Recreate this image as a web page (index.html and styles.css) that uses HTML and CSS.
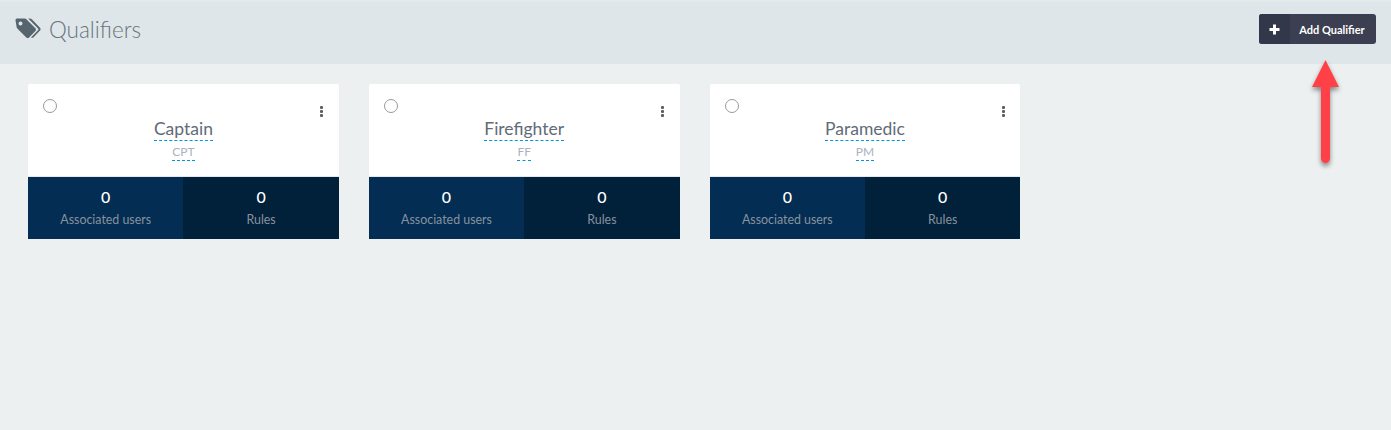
FILE: index.html
```html
<!DOCTYPE html>
<html lang="en">
<head>
  <meta charset="UTF-8" />
  <title>Qualifiers</title>
  <link rel="stylesheet" href="styles.css">
</head>
<body>

<div class="page-header">
  <h1 class="page-title">
    <svg class="tags-icon" width="26" height="22" viewBox="0 0 26 22">
      <path fill="#56646e" d="M0.5 2.2C0.5 1.2 1.2 0.5 2.2 0.5H9.6C10.3 0.5 10.9 0.8 11.4 1.3L20.4 10.3C21.2 11.1 21.2 12.3 20.4 13.1L14.1 19.4C13.3 20.2 12.1 20.2 11.3 19.4L2.3 10.4C1.8 9.9 1.5 9.3 1.5 8.6ZM5.5 3.4A2 2 0 1 0 5.5 7.4A2 2 0 1 0 5.5 3.4Z"/>
      <path fill="#56646e" d="M13.2 0.5H15C15.7 0.5 16.3 0.8 16.8 1.3L25 9.8C25.8 10.6 25.8 11.8 25 12.6L18.6 19.2C17.9 19.9 16.8 20 16 19.4L23 12.3C23.5 11.8 23.5 11 23 10.5Z"/>
    </svg>
    Qualifiers
  </h1>
  <button class="add-btn">
    <span class="add-btn-icon">
      <svg width="11" height="11" viewBox="0 0 11 11"><path fill="#fff" d="M4 0.5H7V4H10.5V7H7V10.5H4V7H0.5V4H4Z"/></svg>
    </span>
    <span class="add-btn-label">Add Qualifier</span>
  </button>
</div>

<div class="card-list">
  <div class="card">
    <div class="card-top">
      <span class="radio"></span>
      <span class="dots"><i></i><i></i><i></i></span>
      <div class="card-name"><span>Captain</span></div>
      <div class="card-code"><span>CPT</span></div>
    </div>
    <div class="card-stats">
      <div class="stat stat-users"><b>0</b><span>Associated users</span></div>
      <div class="stat stat-rules"><b>0</b><span>Rules</span></div>
    </div>
  </div>

  <div class="card">
    <div class="card-top">
      <span class="radio"></span>
      <span class="dots"><i></i><i></i><i></i></span>
      <div class="card-name"><span>Firefighter</span></div>
      <div class="card-code"><span>FF</span></div>
    </div>
    <div class="card-stats">
      <div class="stat stat-users"><b>0</b><span>Associated users</span></div>
      <div class="stat stat-rules"><b>0</b><span>Rules</span></div>
    </div>
  </div>

  <div class="card">
    <div class="card-top">
      <span class="radio"></span>
      <span class="dots"><i></i><i></i><i></i></span>
      <div class="card-name"><span>Paramedic</span></div>
      <div class="card-code"><span>PM</span></div>
    </div>
    <div class="card-stats">
      <div class="stat stat-users"><b>0</b><span>Associated users</span></div>
      <div class="stat stat-rules"><b>0</b><span>Rules</span></div>
    </div>
  </div>
</div>

<!-- red annotation arrow over the page -->
<svg class="arrow" width="41" height="112" viewBox="0 0 41 112">
  <defs>
    <filter id="arrow-shadow" x="-40%" y="-10%" width="180%" height="125%">
      <feDropShadow dx="0" dy="3" stdDeviation="2.5" flood-color="#000" flood-opacity="0.45"/>
    </filter>
  </defs>
  <path filter="url(#arrow-shadow)" fill="#ff4146" d="M20.5 2L34 29H25V100.500A4.500 4.500 0 0 1 16 100.500V29H7Z"/>
</svg>

</body>
</html>
```

FILE: styles.css
```css
body {
  margin: 0;
  height: 430px;
  overflow: hidden;
  font-family: Lato, "Noto Sans", sans-serif;
  background-color: #ecf0f1;
}

.page-header {
  display: flex;
  justify-content: space-between;
  align-items: flex-start;
  box-sizing: border-box;
  height: 64px;
  padding: 12px 15px 0;
  background: #dee6e9;
  border-top: 2px solid #e4eaec;
}

.page-title {
  display: flex;
  align-items: center;
  gap: 8px;
  height: 30px;
  margin: 0;
  font-size: 22.5px;
  font-weight: 300;
  color: #68747e;
}

.add-btn {
  display: flex;
  align-items: stretch;
  height: 30px;
  padding: 0;
  border: none;
  border-radius: 3px;
  overflow: hidden;
  background: #3b3f51;
  color: #fff;
  font-family: inherit;
  font-size: 11px;
  font-weight: 700;
}

.add-btn-icon {
  display: flex;
  align-items: center;
  justify-content: center;
  width: 31px;
  background: #33374a;
}

.add-btn-label {
  display: flex;
  align-items: center;
  justify-content: center;
  width: 84px;
  padding-right: 2px;
}

.card-list {
  display: flex;
  gap: 30px;
  padding: 20px 28px;
}

.card {
  width: 310.8px;
  border-radius: 2px 2px 0 0;
  overflow: hidden;
  background: #fff;
}

.card-top {
  position: relative;
  height: 92px;
  border-bottom: 1px solid #e6e9ea;
  text-align: center;
}

.radio {
  position: absolute;
  left: 15px;
  top: 15px;
  width: 12px;
  height: 12px;
  border: 1px solid #999;
  border-radius: 50%;
}

.dots {
  position: absolute;
  right: 15.5px;
  top: 22px;
  display: flex;
  flex-direction: column;
  gap: 1px;
}

.dots i {
  display: block;
  width: 3px;
  height: 3px;
  border-radius: 1px;
  background: #5d5d66;
}

.card-name {
  height: 23px;
  padding-top: 34px;
  font-size: 17.5px;
  line-height: 22px;
  color: #5f6b78;
}

.card-name span,
.card-code span {
  display: inline-block;
  border-bottom: 1px dashed #0095dd;
}

.card-code {
  padding-top: 3px;
  font-size: 12px;
  line-height: 16px;
  color: #a9b2bd;
}

.card-stats {
  display: flex;
  height: 62px;
}

.stat {
  display: flex;
  flex-direction: column;
  align-items: center;
  flex: 1;
  padding-top: 9px;
  box-sizing: border-box;
}

.stat b {
  font-size: 16px;
  font-weight: 500;
  line-height: 22px;
  color: #fff;
}

.stat span {
  margin-top: 3px;
  font-size: 12.4px;
  line-height: 18px;
  color: #87929e;
}

.stat-users {
  background: #032d52;
}

.stat-rules {
  background: #01203a;
}

.arrow {
  position: absolute;
  left: 1305px;
  top: 58px;
}
```
